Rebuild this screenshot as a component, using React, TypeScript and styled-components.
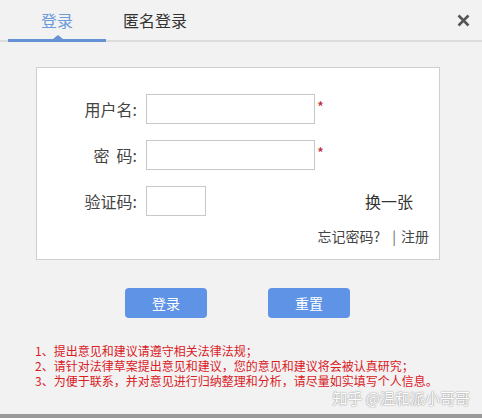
import styled, { createGlobalStyle } from "styled-components";

const GlobalStyle = createGlobalStyle`
  html, body {
    margin: 0;
    padding: 0;
    background: #f2f2f2;
    font-family: "Noto Sans CJK SC", "Noto Sans", sans-serif;
  }
`;

type TabProps = { $active?: boolean };

export default function App() {
  return (
    <Page>
      <GlobalStyle />
      <TabBar>
        <Tab $active>登录</Tab>
        <Tab>匿名登录</Tab>
        <Close>
          <svg width="13" height="13" viewBox="0 0 13 13">
            <path d="M1.5 1.5 L11.5 11.5 M11.5 1.5 L1.5 11.5" stroke="#555" strokeWidth="2.6" />
          </svg>
        </Close>
      </TabBar>

      <Card>
        <Row>
          <Label>用户名:</Label>
          <Input />
          <Star>*</Star>
        </Row>
        <Row>
          <Label>密&nbsp;&nbsp;码:</Label>
          <Input type="password" />
          <Star>*</Star>
        </Row>
        <Row>
          <Label>验证码:</Label>
          <Input $small />
          <Refresh>换一张</Refresh>
        </Row>
        <Links>
          忘记密码?<Sep>|</Sep>注册
        </Links>
      </Card>

      <Buttons>
        <Button>登录</Button>
        <Button>重置</Button>
      </Buttons>

      <Notes>
        <div>1、提出意见和建议请遵守相关法律法规；</div>
        <div>2、请针对法律草案提出意见和建议，您的意见和建议将会被认真研究；</div>
        <div>3、为便于联系，并对意见进行归纳整理和分析，请尽量如实填写个人信息。</div>
      </Notes>
      <Watermark>知乎 @温和派小哥哥</Watermark>
      <BottomBar />
    </Page>
  );
}

const Page = styled.div`
  width: 482px;
  height: 418px;
  position: relative;
  background: #f2f2f2;
  overflow: hidden;
`;

const TabBar = styled.div`
  height: 40px;
  display: flex;
  align-items: flex-end;
  padding-left: 8px;
  border-bottom: 2px solid #dcdcdc;
  position: relative;
`;

const Tab = styled.div<TabProps>`
  width: ${(p) => (p.$active ? "98px" : "auto")};
  padding: ${(p) => (p.$active ? "0" : "0 0 0 17px")};
  box-sizing: border-box;
  text-align: center;
  font-size: 16px;
  line-height: 40px;
  height: 40px;
  color: ${(p) => (p.$active ? "#6d9bdb" : "#333")};
  position: relative;
  ${(p) =>
    p.$active &&
    `
    &::after {
      content: "";
      position: absolute;
      left: 0;
      right: 0;
      bottom: -2px;
      height: 3px;
      background: #6592d6;
    }
    &::before {
      content: "";
      position: absolute;
      left: 45px;
      bottom: 1px;
      border-left: 5px solid transparent;
      border-right: 5px solid transparent;
      border-bottom: 4px solid #6592d6;
    }
  `}
`;

const Close = styled.div`
  position: absolute;
  right: 12px;
  top: 14px;
  display: flex;
`;

const Card = styled.div`
  margin: 25px 42px 0 36px;
  height: 193px;
  box-sizing: border-box;
  background: #fff;
  border: 1px solid #cfcfcf;
  padding: 26px 10px 0 0;
  display: flex;
  flex-direction: column;
  gap: 16px;
`;

const Row = styled.div`
  display: flex;
  align-items: center;
  height: 30px;
`;

const Label = styled.div`
  width: 100px;
  text-align: right;
  font-size: 16px;
  color: #444;
  margin-right: 9px;
`;

const Input = styled.input<{ $small?: boolean }>`
  width: ${(p) => (p.$small ? "60px" : "169px")};
  height: 30px;
  box-sizing: border-box;
  border: 1px solid #c8c8c8;
  outline: none;
  background: #fff;
`;

const Star = styled.span`
  color: #c0272d;
  font-size: 15px;
  margin-left: 2px;
  align-self: flex-start;
  margin-top: 2px;
`;

const Refresh = styled.span`
  font-size: 16px;
  color: #333;
  margin-left: 159px;
`;

const Links = styled.div`
  display: flex;
  justify-content: flex-end;
  align-items: center;
  font-size: 14px;
  color: #444;
  margin-top: -6px;
`;

const Sep = styled.span`
  margin: 0 5px 0 12px;
  color: #666;
`;

const Buttons = styled.div`
  display: flex;
  justify-content: center;
  gap: 61px;
  margin-top: 28px;
  padding-right: 7px;
`;

const Button = styled.button`
  width: 82px;
  height: 30px;
  border: none;
  border-radius: 4px;
  background: #5f93e6;
  color: #fff;
  font-family: inherit;
  font-size: 14px;
`;

const Notes = styled.div`
  margin: 25px 0 0 35px;
  font-size: 12px;
  line-height: 15px;
  color: #d9201f;
`;

const Watermark = styled.div`
  position: absolute;
  right: 12px;
  bottom: 10px;
  font-size: 15px;
  color: #fff;
  text-shadow: 0 0 1px #888, 0 0 2px #aaa;
`;

const BottomBar = styled.div`
  position: absolute;
  left: 0;
  right: 0;
  bottom: 0;
  height: 4px;
  background: #999;
`;
